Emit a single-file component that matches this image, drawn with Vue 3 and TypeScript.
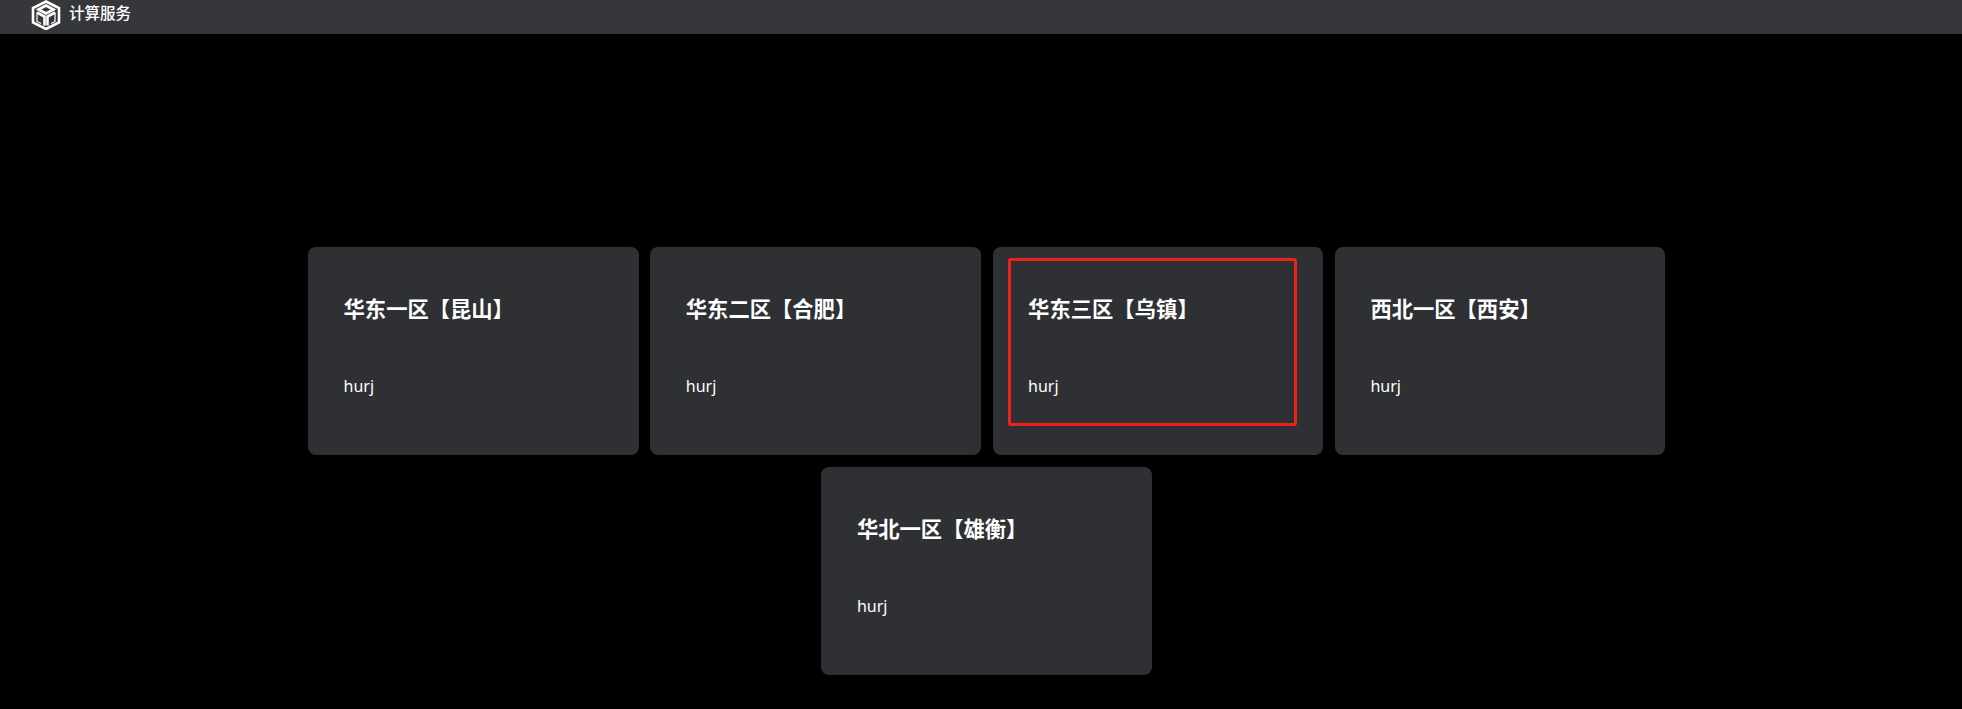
<script setup lang="ts">
const regions = [
  { name: '华东一区【昆山】', owner: 'hurj' },
  { name: '华东二区【合肥】', owner: 'hurj' },
  { name: '华东三区【乌镇】', owner: 'hurj', marked: true },
  { name: '西北一区【西安】', owner: 'hurj' },
  { name: '华北一区【雄衡】', owner: 'hurj' }
]
</script>

<template>
  <div class="page">
    <header class="top-bar">
      <svg class="logo" viewBox="0 0 30 30" fill="none" stroke="#fff" stroke-linejoin="miter">
        <path d="M15 1.5 28 8V22.5L15 29 2 22.5V8Z" stroke-width="2.6" />
        <path d="M15 5.5 22.5 9.5 15 13.5 7.5 9.5Z" stroke-width="2.6" />
        <path d="M6 12.5 13.5 16.5V25.5M24 12.5 16.5 16.5V25.5" stroke-width="2.6" />
        <path d="M6 12.5V21.5L10 23.5M24 12.5V21.5L20 23.5" stroke-width="1.2" />
      </svg>
      <span class="top-title">计算服务</span>
    </header>
    <main class="region-list">
      <section v-for="item in regions" :key="item.name" class="region-card">
        <h3 class="region-name">{{ item.name }}</h3>
        <p class="region-owner">{{ item.owner }}</p>
        <div v-if="item.marked" class="mark"></div>
      </section>
    </main>
  </div>
</template>

<style>
html,
body {
  margin: 0;
  background: #000;
}
</style>

<style scoped>
.page {
  min-height: 709px;
  background: #000;
  font-family: "Noto Sans", "Noto Sans CJK SC", sans-serif;
  color: #fff;
}
.top-bar {
  height: 34px;
  box-sizing: border-box;
  padding-left: 31px;
  display: flex;
  align-items: center;
  background: #36373b;
}
.logo {
  width: 30px;
  height: 30px;
  margin-top: -5px;
}
.top-title {
  margin-left: 8px;
  margin-top: -9px;
  font-size: 15.5px;
  font-weight: 500;
}
.region-list {
  box-sizing: border-box;
  width: 1360px;
  margin: 213px 0 0 306.75px;
  display: flex;
  flex-wrap: wrap;
  justify-content: center;
  gap: 12.7px 11.7px;
}
.region-card {
  position: relative;
  box-sizing: border-box;
  width: 330.6px;
  height: 207.5px;
  padding: 46.5px 35.5px 0;
  background: #2f3034;
  border-radius: 8px;
}
.region-name {
  margin: 0;
  font-size: 21.3px;
  line-height: 30px;
  font-weight: 700;
}
.region-owner {
  margin: 50.5px 0 0;
  font-size: 16px;
  line-height: 24px;
}
.mark {
  position: absolute;
  left: 15px;
  top: 11px;
  width: 289px;
  height: 168px;
  box-sizing: border-box;
  border: 3px solid #f0201a;
  border-radius: 3px;
}
</style>
